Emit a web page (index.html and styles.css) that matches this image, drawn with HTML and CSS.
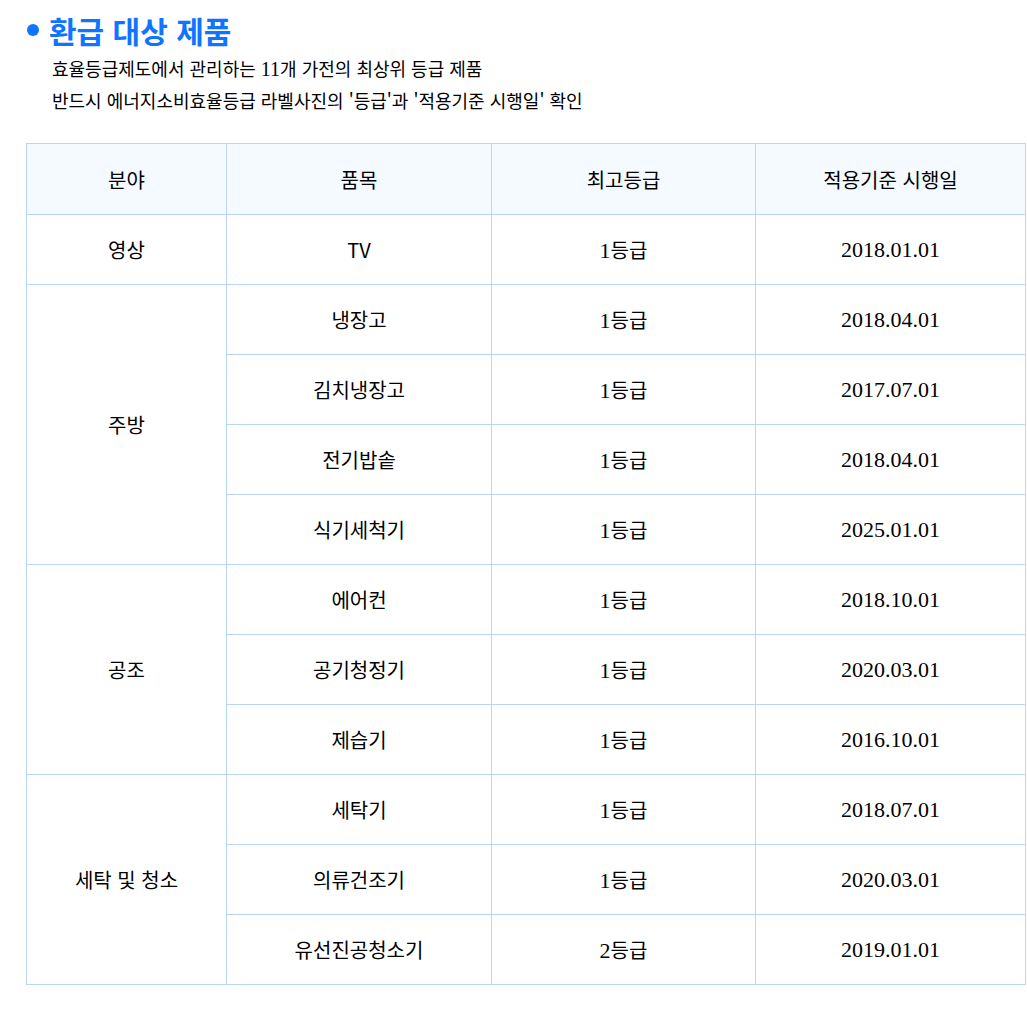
FILE: index.html
```html
<!DOCTYPE html>
<html lang="ko">
<head>
<meta charset="utf-8">
<link rel="stylesheet" href="styles.css">
</head>
<body>
<div class="wrap">
  <h2 class="title"><span class="dot"></span>환급 대상 제품</h2>
  <p class="desc">효율등급제도에서 관리하는 <span class="num">11</span>개 가전의 최상위 등급 제품</p>
  <p class="desc">반드시 에너지소비효율등급 라벨사진의 '등급'과 '적용기준 시행일' 확인</p>
  <table class="tbl">
    <colgroup>
      <col class="c1"><col class="c2"><col class="c3"><col class="c4">
    </colgroup>
    <thead>
      <tr><th>분야</th><th>품목</th><th>최고등급</th><th>적용기준 시행일</th></tr>
    </thead>
    <tbody>
      <tr><td>영상</td><td>TV</td><td><span class="num">1</span>등급</td><td class="num">2018.01.01</td></tr>
      <tr><td rowspan="4">주방</td><td>냉장고</td><td><span class="num">1</span>등급</td><td class="num">2018.04.01</td></tr>
      <tr><td>김치냉장고</td><td><span class="num">1</span>등급</td><td class="num">2017.07.01</td></tr>
      <tr><td>전기밥솥</td><td><span class="num">1</span>등급</td><td class="num">2018.04.01</td></tr>
      <tr><td>식기세척기</td><td><span class="num">1</span>등급</td><td class="num">2025.01.01</td></tr>
      <tr><td rowspan="3">공조</td><td>에어컨</td><td><span class="num">1</span>등급</td><td class="num">2018.10.01</td></tr>
      <tr><td>공기청정기</td><td><span class="num">1</span>등급</td><td class="num">2020.03.01</td></tr>
      <tr><td>제습기</td><td><span class="num">1</span>등급</td><td class="num">2016.10.01</td></tr>
      <tr><td rowspan="3">세탁 및 청소</td><td>세탁기</td><td><span class="num">1</span>등급</td><td class="num">2018.07.01</td></tr>
      <tr><td>의류건조기</td><td><span class="num">1</span>등급</td><td class="num">2020.03.01</td></tr>
      <tr><td>유선진공청소기</td><td><span class="num">2</span>등급</td><td class="num">2019.01.01</td></tr>
    </tbody>
  </table>
</div>
</body>
</html>
```

FILE: styles.css
```css
html, body {
  margin: 0;
  padding: 0;
  background: #fff;
}
body {
  font-family: "Noto Sans CJK KR", "Noto Sans", sans-serif;
  color: #000;
}
.wrap {
  padding: 8px 0 0 26px;
}
.title {
  display: flex;
  align-items: center;
  margin: 0;
  font-size: 30px;
  font-weight: 700;
  color: #0f74ff;
  line-height: 44px;
  height: 44px;
}
.dot {
  width: 12px;
  height: 12px;
  border-radius: 50%;
  background: #0f74ff;
  margin: 0 10px 0 1px;
}
.desc {
  margin: 0;
  padding-left: 26px;
  font-size: 18px;
  line-height: 32px;
  height: 32px;
  color: #000;
}
.desc .num {
  font-size: 20px;
}
.num {
  font-family: "Liberation Serif", serif;
}
.tbl {
  margin-top: 27px;
  border-collapse: collapse;
  table-layout: fixed;
  width: 999px;
  font-size: 20px;
}
.c1 { width: 200px; }
.c2 { width: 265px; }
.c3 { width: 264px; }
.c4 { width: 270px; }
.tbl th, .tbl td {
  border: 1px solid #b8d6fb;
  height: 69px;
  padding: 0;
  text-align: center;
  vertical-align: middle;
  font-weight: 400;
  color: #000;
}
.tbl th {
  height: 70px;
  background: #f4faff;
}
.tbl td.num,
.tbl td .num {
  font-size: 22px;
}
```
